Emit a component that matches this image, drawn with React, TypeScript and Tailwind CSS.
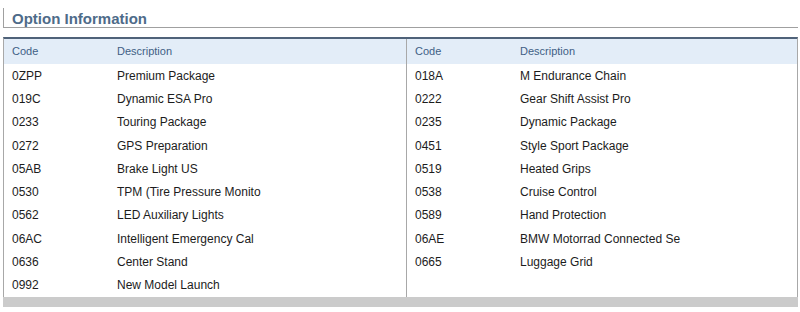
const left = [
  ['0ZPP', 'Premium Package'],
  ['019C', 'Dynamic ESA Pro'],
  ['0233', 'Touring Package'],
  ['0272', 'GPS Preparation'],
  ['05AB', 'Brake Light US'],
  ['0530', 'TPM (Tire Pressure Monito'],
  ['0562', 'LED Auxiliary Lights'],
  ['06AC', 'Intelligent Emergency Cal'],
  ['0636', 'Center Stand'],
  ['0992', 'New Model Launch'],
]

const right = [
  ['018A', 'M Endurance Chain'],
  ['0222', 'Gear Shift Assist Pro'],
  ['0235', 'Dynamic Package'],
  ['0451', 'Style Sport Package'],
  ['0519', 'Heated Grips'],
  ['0538', 'Cruise Control'],
  ['0589', 'Hand Protection'],
  ['06AE', 'BMW Motorrad Connected Se'],
  ['0665', 'Luggage Grid'],
]

const OptionColumn = ({ rows, divider }: { rows: string[][]; divider?: boolean }) => (
  <div className={`flex flex-col ${divider ? 'border-r border-[#a8a8a8]' : ''}`}>
    <div className="flex items-center h-[25px] bg-[#e3edf8] text-[11px] text-[#3f5f85]">
      <span className="w-[113px] pl-2">Code</span>
      <span>Description</span>
    </div>
    {rows.map(([code, desc]) => (
      <div key={code} className="flex items-center h-[23.3px] text-[12px] text-[#1c1c1c]">
        <span className="w-[113px] pl-2">{code}</span>
        <span className="whitespace-nowrap">{desc}</span>
      </div>
    ))}
  </div>
)

export default function App() {
  return (
    <div className="w-[800px] h-[312px] bg-white font-['Liberation_Sans',Arial,sans-serif]">
      <div className="pt-[8px] pl-[3px] pr-[2px]">
        <div className="h-[20px] border-l border-b border-[#a0a0a0] pl-[8px] flex items-center">
          <h2 className="text-[15px] font-bold leading-none text-[#4e6b89] pt-[1px]">Option Information</h2>
        </div>

        <div className="mt-[9px] border-t-2 border-[#4f6279] border-x border-x-[#a8a8a8]">
          <div className="grid grid-cols-[403px_1fr]">
            <OptionColumn rows={left} divider />
            <OptionColumn rows={right} />
          </div>
        </div>
        <div className="h-[10px] bg-[#cbcbcb]" />
      </div>
    </div>
  )
}
